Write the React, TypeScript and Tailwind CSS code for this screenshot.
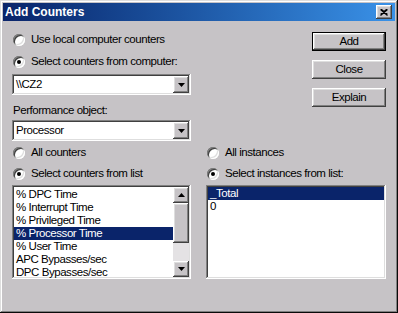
import React from "react";

const raised =
  "shadow-[inset_-1px_-1px_#404040,inset_1px_1px_#ffffff,inset_-2px_-2px_#808080,inset_2px_2px_#dedede]";
const sunken =
  "shadow-[inset_-1px_-1px_#ffffff,inset_1px_1px_#808080,inset_-2px_-2px_#dedede,inset_2px_2px_#404040]";

const Radio: React.FC<{ checked?: boolean; label: string }> = ({ checked, label }) => (
  <div className="flex items-center h-4">
    <span
      className={`ml-px w-3 h-3 rounded-full bg-white flex items-center justify-center shadow-[inset_1px_1px_#808080,inset_-1px_-1px_#ffffff,inset_2px_2px_#404040,inset_-2px_-2px_#dedede]`}
    >
      {checked && <span className="w-1 h-1 rounded-full bg-black" />}
    </span>
    <span className="ml-[6px]">{label}</span>
  </div>
);

const Arrow: React.FC<{ dir: "up" | "down" }> = ({ dir }) => (
  <svg width="7" height="4" viewBox="0 0 7 4">
    <path d={dir === "down" ? "M0 0h7L3.5 4z" : "M0 4h7L3.5 0z"} fill="#000" />
  </svg>
);

const Combo: React.FC<{ value: string }> = ({ value }) => (
  <div className={`w-[179px] h-[21px] bg-white p-[2px] flex ${sunken}`}>
    <div className="flex-1 pl-[2px] leading-[17px]">{value}</div>
    <div className={`w-4 h-[17px] bg-[#c6c3c6] flex items-center justify-center ${raised}`}>
      <Arrow dir="down" />
    </div>
  </div>
);

const Button: React.FC<{ label: string; def?: boolean }> = ({ label, def }) => (
  <div className={`w-[74px] h-[19px] ${def ? "border border-black" : ""}`}>
    <div className={`w-full h-full bg-[#c6c3c6] flex items-center justify-center ${raised}`}>
      {label}
    </div>
  </div>
);

const counters = [
  "% DPC Time",
  "% Interrupt Time",
  "% Privileged Time",
  "% Processor Time",
  "% User Time",
  "APC Bypasses/sec",
  "DPC Bypasses/sec",
];

export default function App() {
  return (
    <div
      className={`w-[398px] h-[313px] bg-[#c6c3c6] p-[3px] text-[11.5px] tracking-[-0.45px] text-black font-['Liberation_Sans',Arial,sans-serif] shadow-[inset_-1px_-1px_#0a0a0a,inset_1px_1px_#dedede,inset_-2px_-2px_#808080,inset_2px_2px_#ffffff]`}
    >
      <div className="h-[18px] bg-linear-to-r from-[#0a246a] to-[#3a92e8] flex items-center justify-between pl-[2px] pr-[3px]">
        <span className="text-white font-bold text-[12px] tracking-normal">Add Counters</span>
        <div className={`w-4 h-[14px] bg-[#c6c3c6] flex items-center justify-center ${raised}`}>
          <svg width="8" height="7" viewBox="0 0 8 7">
            <path d="M0.5 0.5L7.5 6.5M1.5 0.5L7.5 5.5M7.5 0.5L0.5 6.5M6.5 0.5L0.5 5.5" stroke="#000" strokeWidth="1.2" />
          </svg>
        </div>
      </div>

      <div className="px-[9px]">
        <div className="flex justify-between pt-[11px]">
          <div className="w-[179px] flex flex-col">
            <Radio label="Use local computer counters" />
            <div className="mt-[6px]">
              <Radio checked label="Select counters from computer:" />
            </div>
            <div className="mt-1">
              <Combo value={"\\\\CZ2"} />
            </div>
            <div className="mt-2 h-4 flex items-center pl-px">Performance object:</div>
            <div className="mt-px">
              <Combo value="Processor" />
            </div>
          </div>
          <div className="flex flex-col gap-[9px]">
            <Button def label="Add" />
            <Button label="Close" />
            <Button label="Explain" />
          </div>
        </div>

        <div className="grid grid-cols-[179px_180px] gap-x-[15px] mt-1">
          <div className="flex flex-col">
            <Radio label="All counters" />
            <div className="mt-[5px]">
              <Radio checked label="Select counters from list" />
            </div>
            <div className={`mt-[3px] h-[94px] bg-white p-[2px] flex ${sunken}`}>
              <div className="flex-1 pt-px">
                {counters.map((c) => (
                  <div
                    key={c}
                    className={`h-[13px] leading-[13px] px-[2px] whitespace-nowrap ${
                      c === "% Processor Time" ? "bg-[#0a246a] text-white" : ""
                    }`}
                  >
                    {c}
                  </div>
                ))}
              </div>
              <div className="w-4 flex flex-col">
                <div className={`h-4 bg-[#c6c3c6] flex items-center justify-center ${raised}`}>
                  <Arrow dir="up" />
                </div>
                <div className={`h-10 bg-[#c6c3c6] ${raised}`} />
                <div className="flex-1 bg-[#e4e2e4]" />
                <div className={`h-4 bg-[#c6c3c6] flex items-center justify-center ${raised}`}>
                  <Arrow dir="down" />
                </div>
              </div>
            </div>
          </div>
          <div className="flex flex-col">
            <Radio label="All instances" />
            <div className="mt-[5px]">
              <Radio checked label="Select instances from list:" />
            </div>
            <div className={`mt-[3px] h-[94px] bg-white p-[2px] ${sunken}`}>
              <div className="h-[13px] leading-[13px] px-[2px] bg-[#0a246a] text-white">_Total</div>
              <div className="h-[13px] leading-[13px] px-[2px]">0</div>
            </div>
          </div>
        </div>
      </div>
    </div>
  );
}
